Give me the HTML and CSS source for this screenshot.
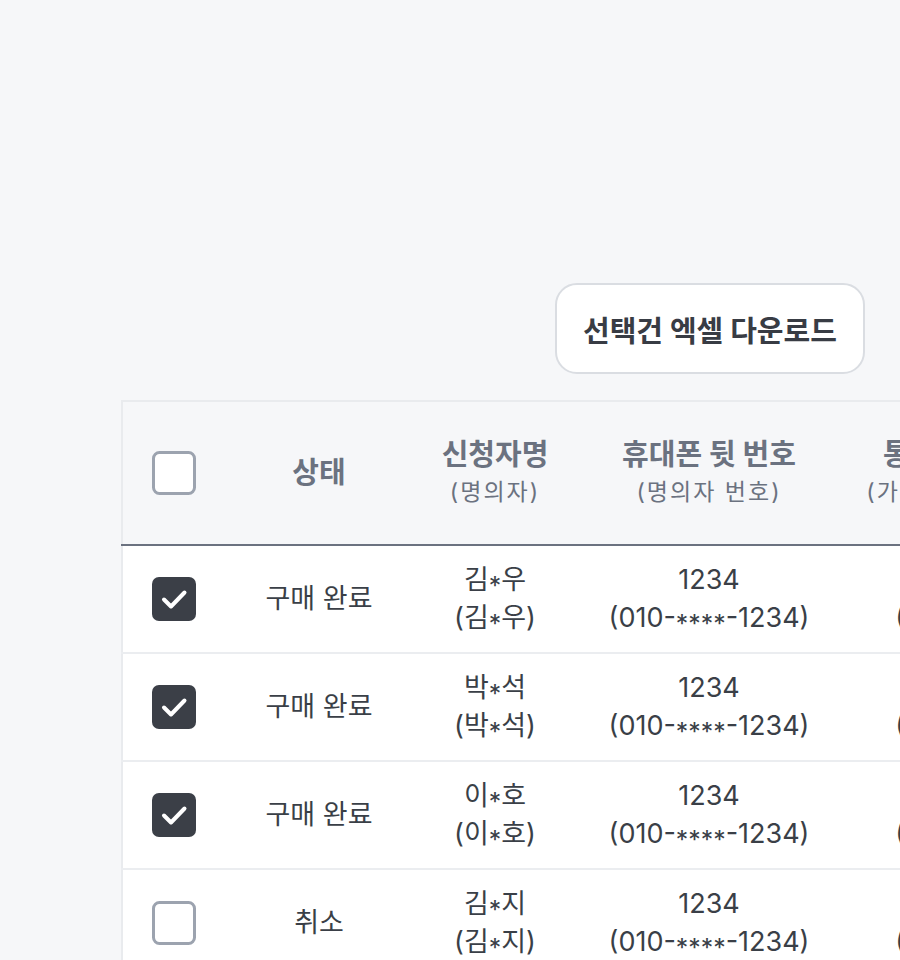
FILE: index.html
```html
<!DOCTYPE html>
<html lang="ko">
<head>
    <meta charset="UTF-8">
    <meta name="viewport" content="width=device-width, initial-scale=1.0">
    <title>신청 내역</title>
    <link rel="stylesheet" href="styles.css">
</head>
<body>
    <div class="page">
        <div class="toolbar">
            <button class="btn-outline">선택건 엑셀 다운로드</button>
        </div>

        <table class="order-table">
            <thead>
                <tr>
                    <th class="col-check">
                        <span class="checkbox">
                            <svg viewBox="0 0 44 44"><rect x="1.5" y="1.5" width="41" height="41" rx="6" fill="#fff" stroke="#9ca3af" stroke-width="3"/></svg>
                        </span>
                    </th>
                    <th class="col-status">상태</th>
                    <th class="col-name">신청자명<span class="th-sub">(명의자)</span></th>
                    <th class="col-phone">휴대폰 뒷 번호<span class="th-sub">(명의자 번호)</span></th>
                    <th class="col-carrier">통신사<span class="th-sub">(가입유형)</span></th>
                    <th class="col-date">신청일<span class="th-sub">(처리일)</span></th>
                </tr>
            </thead>
            <tbody>
                <tr>
                    <td>
                        <span class="checkbox">
                            <svg viewBox="0 0 44 44"><rect width="44" height="44" rx="7" fill="#3b3f47"/><path d="M12 22.5l7 7 13.5-14" fill="none" stroke="#fff" stroke-width="4" stroke-linecap="round" stroke-linejoin="round"/></svg>
                        </span>
                    </td>
                    <td>구매 완료</td>
                    <td>김<span class="mask">*</span>우<br>(김<span class="mask">*</span>우)</td>
                    <td>1234<br>(010-<span class="mask">****</span>-1234)</td>
                    <td>KT<br>(KT)</td>
                    <td>2024.05.02<br>(2024.05.03)</td>
                </tr>
                <tr>
                    <td>
                        <span class="checkbox">
                            <svg viewBox="0 0 44 44"><rect width="44" height="44" rx="7" fill="#3b3f47"/><path d="M12 22.5l7 7 13.5-14" fill="none" stroke="#fff" stroke-width="4" stroke-linecap="round" stroke-linejoin="round"/></svg>
                        </span>
                    </td>
                    <td>구매 완료</td>
                    <td>박<span class="mask">*</span>석<br>(박<span class="mask">*</span>석)</td>
                    <td>1234<br>(010-<span class="mask">****</span>-1234)</td>
                    <td>KT<br>(KT)</td>
                    <td>2024.05.02<br>(2024.05.03)</td>
                </tr>
                <tr>
                    <td>
                        <span class="checkbox">
                            <svg viewBox="0 0 44 44"><rect width="44" height="44" rx="7" fill="#3b3f47"/><path d="M12 22.5l7 7 13.5-14" fill="none" stroke="#fff" stroke-width="4" stroke-linecap="round" stroke-linejoin="round"/></svg>
                        </span>
                    </td>
                    <td>구매 완료</td>
                    <td>이<span class="mask">*</span>호<br>(이<span class="mask">*</span>호)</td>
                    <td>1234<br>(010-<span class="mask">****</span>-1234)</td>
                    <td>KT<br>(KT)</td>
                    <td>2024.05.01<br>(2024.05.02)</td>
                </tr>
                <tr>
                    <td>
                        <span class="checkbox">
                            <svg viewBox="0 0 44 44"><rect x="1.5" y="1.5" width="41" height="41" rx="6" fill="#fff" stroke="#9ca3af" stroke-width="3"/></svg>
                        </span>
                    </td>
                    <td>취소</td>
                    <td>김<span class="mask">*</span>지<br>(김<span class="mask">*</span>지)</td>
                    <td>1234<br>(010-<span class="mask">****</span>-1234)</td>
                    <td>KT<br>(KT)</td>
                    <td>2024.04.30<br>(2024.05.01)</td>
                </tr>
            </tbody>
        </table>
    </div>
</body>
</html>
```

FILE: styles.css
```css
html, body {
    overflow: hidden;
}

body {
    margin: 0;
    background: #f6f7f9;
    color: #3a3f47;
    font-family: Inter, "Noto Sans CJK KR", sans-serif;
}

.page {
    width: max-content;
    padding: 283px 0 0 121px;
}

/* toolbar */
.toolbar {
    display: flex;
    gap: 16px;
    padding-left: 434px;
    margin-bottom: 26px;
}

.btn-outline {
    height: 91px;
    padding: 0 26px;
    background: #fff;
    border: 2px solid #dadde2;
    border-radius: 22px;
    color: #383c44;
    font-family: Inter, "Noto Sans CJK KR", sans-serif;
    font-size: 29px;
    font-weight: 700;
    cursor: pointer;
}

/* table */
.order-table {
    border-collapse: collapse;
    table-layout: fixed;
    width: 1104px;
    background: #fff;
    border-top: 2px solid #e9ebee;
    border-left: 2px solid #e9ebee;
}

.order-table th {
    height: 142px;
    padding: 0;
    background: #f6f7f9;
    border-bottom: 2px solid #6b7280;
    color: #6b7280;
    font-size: 29px;
    font-weight: 700;
    line-height: 38px;
    text-align: center;
    vertical-align: middle;
}

.th-sub {
    display: block;
    font-size: 23px;
    font-weight: 400;
    letter-spacing: 2px;
    line-height: 36px;
}

.order-table td {
    height: 106px;
    padding: 0;
    border-bottom: 2px solid #ebedf0;
    font-size: 27px;
    line-height: 38px;
    text-align: center;
    vertical-align: middle;
}

/* masked characters sit lower than the default asterisk */
.mask {
    font-size: 0.92em;
    vertical-align: -0.2em;
    line-height: 1;
}

.col-check { width: 102px; }
.col-status { width: 188px; }
.col-name { width: 164px; }
.col-phone { width: 264px; }
.col-carrier { width: 164px; }
.col-date { width: 222px; }

.checkbox {
    display: inline-block;
    width: 44px;
    height: 44px;
    vertical-align: middle;
}

.checkbox svg {
    display: block;
    width: 44px;
    height: 44px;
}
```
